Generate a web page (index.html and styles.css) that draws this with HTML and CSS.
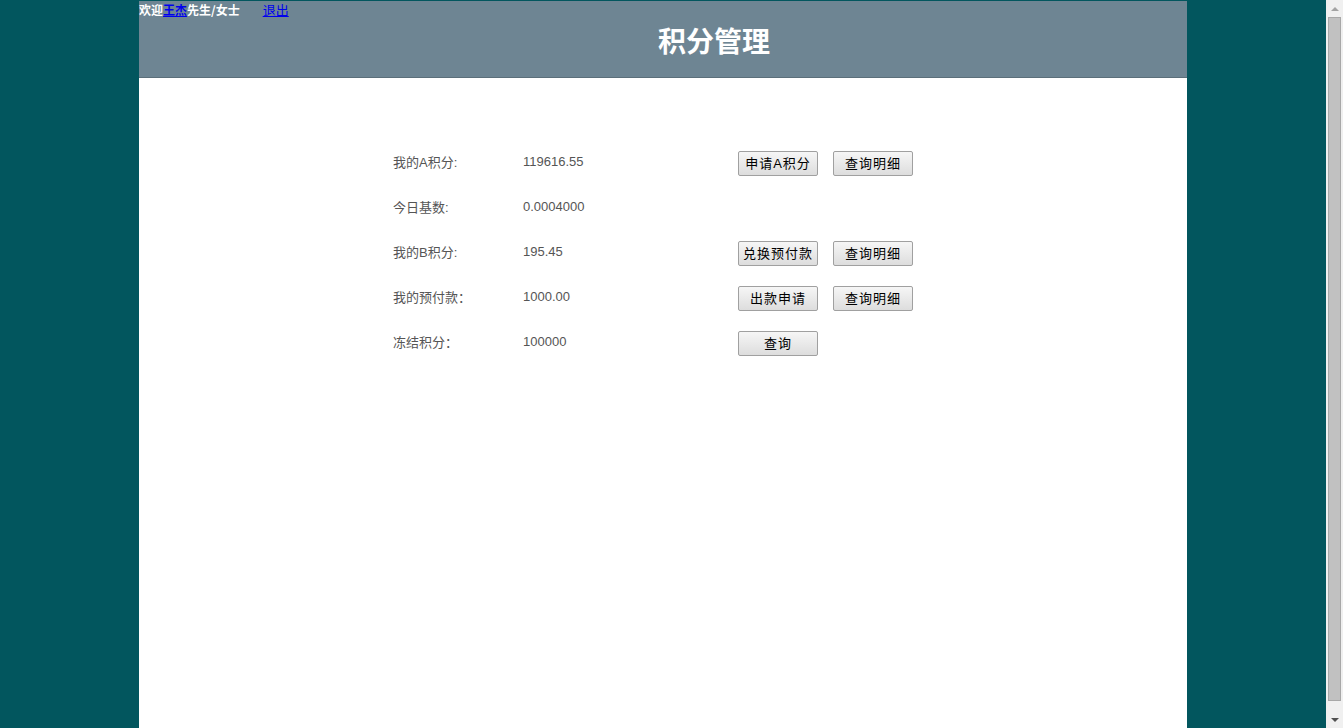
FILE: index.html
```html
<!DOCTYPE html>
<html>
<head>
<meta charset="utf-8">
<link rel="stylesheet" href="styles.css">
</head>
<body>
<div class="viewport">
  <div class="page">
    <div class="header">
      <div class="welcome">欢迎<a href="#" class="user">王杰</a>先生/女士<a href="#" class="logout">退出</a></div>
      <h1 class="title">积分管理</h1>
    </div>
    <div class="content">
      <div class="rows">
        <div class="row">
          <span class="label">我的A积分:</span>
          <span class="value">119616.55</span>
          <span class="actions"><button class="btn">申请A积分</button><button class="btn">查询明细</button></span>
        </div>
        <div class="row">
          <span class="label">今日基数:</span>
          <span class="value">0.0004000</span>
          <span class="actions"></span>
        </div>
        <div class="row">
          <span class="label">我的B积分:</span>
          <span class="value">195.45</span>
          <span class="actions"><button class="btn">兑换预付款</button><button class="btn">查询明细</button></span>
        </div>
        <div class="row">
          <span class="label">我的预付款：</span>
          <span class="value">1000.00</span>
          <span class="actions"><button class="btn">出款申请</button><button class="btn">查询明细</button></span>
        </div>
        <div class="row">
          <span class="label">冻结积分：</span>
          <span class="value">100000</span>
          <span class="actions"><button class="btn">查询</button></span>
        </div>
      </div>
    </div>
  </div>
</div>
<div class="scrollbar">
  <div class="arrow up"></div>
  <div class="track"><div class="thumb"></div></div>
  <div class="arrow down"></div>
</div>
</body>
</html>
```
FILE: styles.css
```css
html, body {
  margin: 0;
  padding: 0;
  height: 728px;
  overflow: hidden;
}
body {
  display: flex;
  background: #02565e;
  font-family: "Liberation Sans", Arial, "Noto Sans CJK SC", sans-serif;
}
.viewport {
  flex: 1;
  padding-top: 1px;
  overflow: hidden;
}
.page {
  width: 1048px;
  margin: 0 auto;
  background: #ffffff;
  height: 740px;
}
.header {
  background: #6e8593;
  height: 76px;
  border-bottom: 1px solid #5b6f7a;
}
.welcome {
  font-size: 12px;
  font-weight: bold;
  color: #ffffff;
  line-height: 18px;
  height: 18px;
  font-family: "Noto Sans CJK SC", sans-serif;
}
.welcome a {
  color: #0000ee;
  text-decoration: underline;
}
.welcome .logout {
  margin-left: 23px;
  font-size: 13px;
  font-weight: normal;
}
.title {
  margin: 1px 0 0;
  padding-left: 102px;
  text-align: center;
  font-size: 28px;
  line-height: 40px;
  color: #ffffff;
  font-weight: bold;
  font-family: "Noto Sans CJK SC", sans-serif;
}
.content {
  padding-top: 73px;
  padding-left: 254px;
}
.rows {
  display: flex;
  flex-direction: column;
}
.row {
  display: grid;
  grid-template-columns: 130px 215px auto;
  align-items: center;
  height: 25px;
  margin-bottom: 20px;
  font-size: 13px;
  color: #555555;
}
.label, .value {
  position: relative;
  top: -2px;
}
.actions {
  display: flex;
  gap: 15px;
}
.btn {
  width: 80px;
  height: 25px;
  padding: 0 0 2px;
  margin: 0;
  font-size: 13px;
  color: #000000;
  font-family: "Liberation Sans", Arial, "Noto Sans CJK SC", sans-serif;
  letter-spacing: 1px;
  border: 1px solid #a0a0a0;
  border-radius: 2px;
  background: linear-gradient(#f6f6f6, #dddddd);
}
.scrollbar {
  width: 17px;
  height: 728px;
  background: #f0f0f0;
  display: flex;
  flex-direction: column;
}
.arrow {
  height: 17px;
  display: flex;
  align-items: center;
  justify-content: center;
}
.arrow.up::before {
  content: "";
  border-left: 4px solid transparent;
  border-right: 4px solid transparent;
  border-bottom: 4px solid #a3a3a3;
}
.arrow.down::before {
  content: "";
  border-left: 4px solid transparent;
  border-right: 4px solid transparent;
  border-top: 4px solid #505050;
}
.track {
  flex: 1;
  padding: 0 2px;
}
.thumb {
  height: 684px;
  background: #c1c1c1;
  border: 1px solid #a8a8a8;
  box-sizing: border-box;
}
```
